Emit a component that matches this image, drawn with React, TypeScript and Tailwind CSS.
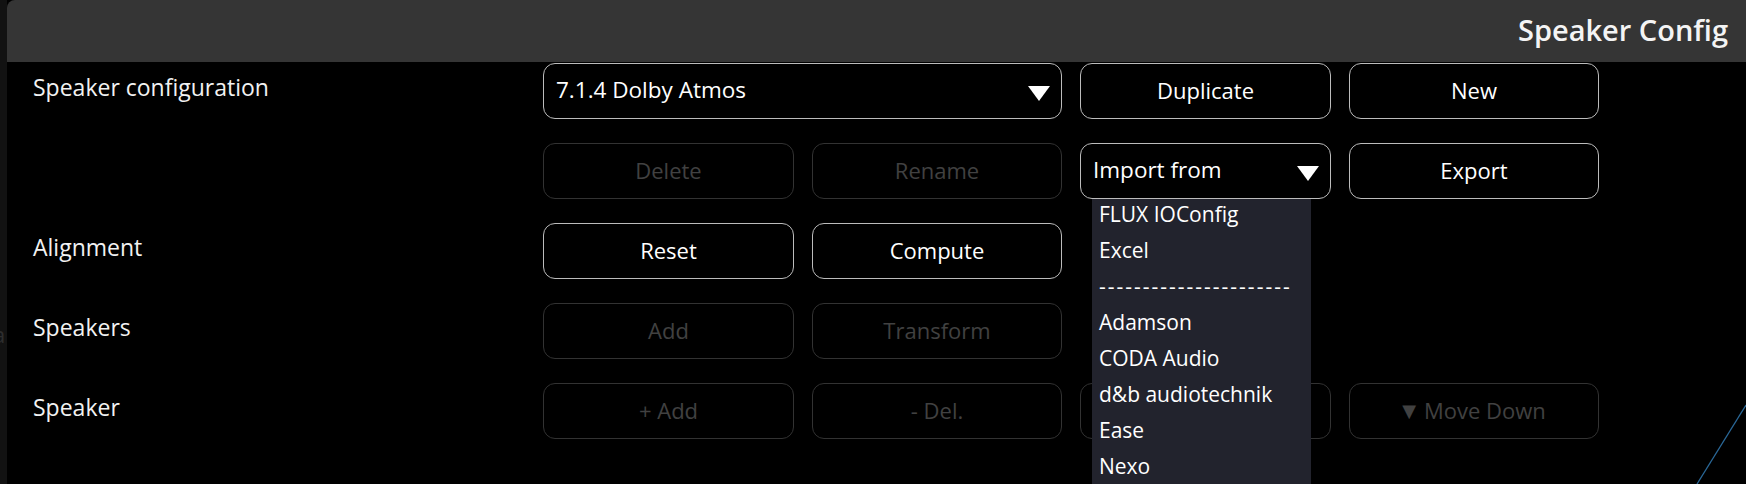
import type React from "react";

const font = { fontFamily: '"Open Sans", "Noto Sans", sans-serif' };

interface BtnProps {
  label?: React.ReactNode;
  disabled?: boolean;
  className?: string;
}

const Btn: React.FC<BtnProps> = ({ label, disabled, className = "" }) => (
  <div
    className={`flex h-[56px] items-center justify-center rounded-[12px] border pb-[2px] text-[22px] ${
      disabled ? "border-[#323232] text-[#414141]" : "border-[#bcbcbc] text-white"
    } ${className}`}
  >
    {label}
  </div>
);

const Arrow = () => (
  <svg width="22" height="15" viewBox="0 0 22 15" className="mt-[4px]">
    <polygon points="0,0 22,0 11,15" fill="#ffffff" />
  </svg>
);

const Select: React.FC<{ value: string; className?: string; children?: React.ReactNode }> = ({
  value,
  className = "",
  children,
}) => (
  <div
    className={`relative flex h-[56px] items-center justify-between rounded-[12px] border border-[#bcbcbc] pl-[12px] pr-[11px] text-[22.5px] text-white ${className}`}
  >
    <span className="pb-[2px]">{value}</span>
    <Arrow />
    {children}
  </div>
);

const importItems = [
  "FLUX IOConfig",
  "Excel",
  "----------------------",
  "Adamson",
  "CODA Audio",
  "d&b audiotechnik",
  "Ease",
  "Nexo",
];

const Label: React.FC<{ text?: string }> = ({ text }) => (
  <div className="pt-[9px] text-[23px] leading-[31px] text-[#f2f2f2]">{text}</div>
);

export default function App() {
  return (
    <div style={font} className="relative flex h-[484px] w-[1746px] overflow-hidden bg-black">
      {/* sliver of the window behind */}
      <div className="relative w-[7px] overflow-hidden bg-[#121212]">
        <span className="absolute left-[-7px] top-[318px] text-[22px] text-[#2e2e2e]">a</span>
      </div>

      <div className="flex flex-1 flex-col">
        <div className="flex h-[62px] items-center justify-end rounded-tl-[8px] bg-[#353535] pb-[2px] pr-[18px]">
          <span className="text-[29px] font-semibold text-[#f4f4f4]">Speaker Config</span>
        </div>

        <div className="grid auto-rows-[56px] grid-cols-[492px_251px_250px_251px_250px] gap-x-[18px] gap-y-[24px] pl-[26px] pt-[1px]">
          {/* Speaker configuration */}
          <Label text="Speaker configuration" />
          <Select value="7.1.4 Dolby Atmos" className="col-span-2" />
          <Btn label="Duplicate" />
          <Btn label="New" />

          <Label />
          <Btn label="Delete" disabled />
          <Btn label="Rename" disabled />
          <Select value="Import from" className="z-10">
            <div className="absolute left-[11px] top-[55px] h-[300px] w-[219px] bg-[#22232d]">
              <div className="-mt-[3px]">
                {importItems.map((item) => (
                  <div
                    key={item}
                    className={`h-[36px] pl-[7px] text-[21px] leading-[36px] text-white ${
                      item.startsWith("-") ? "tracking-[2px] text-[#cfcfcf]" : ""
                    }`}
                  >
                    {item}
                  </div>
                ))}
              </div>
            </div>
          </Select>
          <Btn label="Export" />

          {/* Alignment */}
          <Label text="Alignment" />
          <Btn label="Reset" />
          <Btn label="Compute" />
          <div />
          <div />

          {/* Speakers */}
          <Label text="Speakers" />
          <Btn label="Add" disabled />
          <Btn label="Transform" disabled />
          <div />
          <div />

          {/* Speaker */}
          <Label text="Speaker" />
          <Btn label="+ Add" disabled />
          <Btn label="- Del." disabled />
          {/* hidden under the open menu */}
          <Btn disabled />
          <Btn
            disabled
            label={
              <span className="flex items-center gap-[8px]">
                <span style={{ fontFamily: '"DejaVu Sans", sans-serif' }} className="text-[18px]">
                  ▼
                </span>
                Move Down
              </span>
            }
          />
        </div>
      </div>

      {/* edge of a plot behind the panel */}
      <svg className="absolute bottom-0 right-0" width="60" height="90" viewBox="0 0 60 90">
        <line x1="11" y1="90" x2="60" y2="11" stroke="#2a6898" strokeWidth="1.3" />
      </svg>
    </div>
  );
}
